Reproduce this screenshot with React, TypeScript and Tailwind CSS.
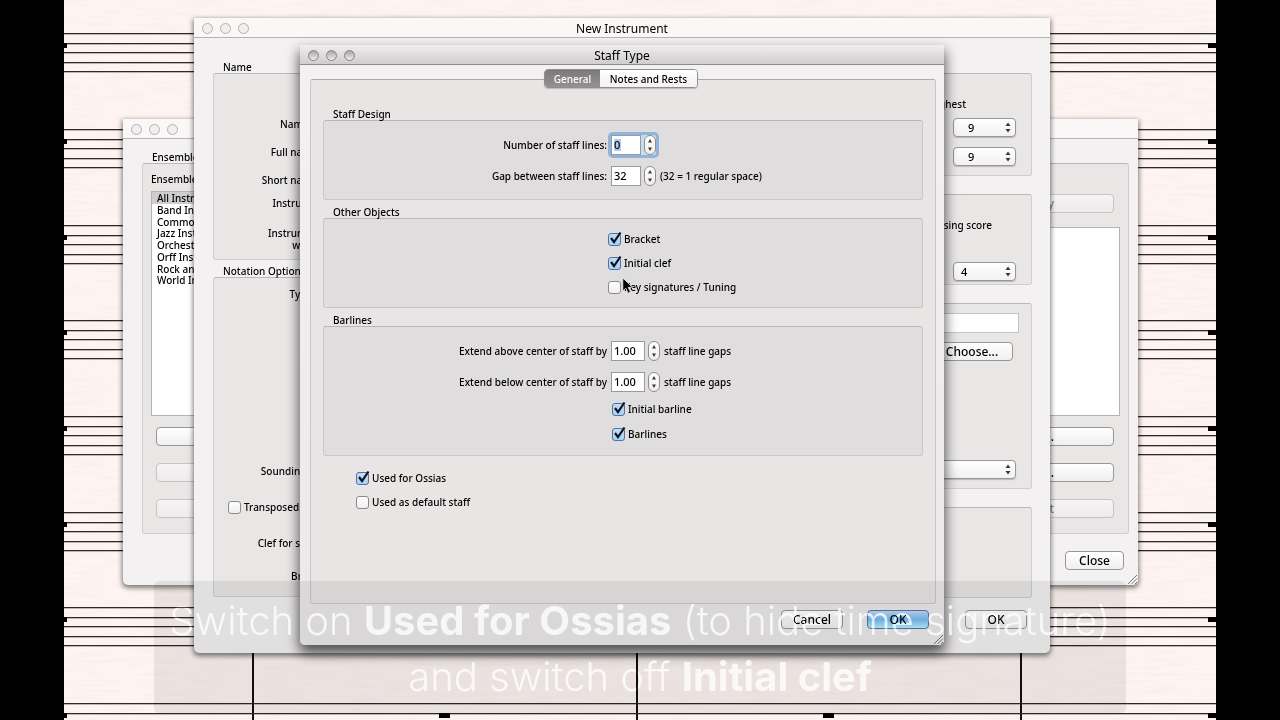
import cx from 'clsx';
import React, { useState } from 'react';

type Children = { children?: React.ReactNode };

const STAFF_TOPS = [33, 129, 225, 320, 416, 512, 607, 703];
const LINE_OFFSETS = [0, 10, 19, 29, 38];
const BARLINES = [189, 573, 957];
const RESTS = [-8, 375, 759, 1144];

const ENSEMBLES = [
  'All Instruments',
  'Band Instruments',
  'Common Instruments',
  'Jazz Instruments',
  'Orchestral Instruments',
  'Orff Instruments',
  'Rock and Pop Instruments',
  'World Instruments',
];

const ScoreComponent = () => (
  <svg className="absolute inset-0 size-full" aria-hidden="true">
    <filter id="paper" x="0" y="0" width="100%" height="100%">
      <feTurbulence type="fractalNoise" baseFrequency="0.025 0.3" numOctaves="3" seed="4" />
      <feColorMatrix values="0 0 0 0 0.9  0 0 0 0 0.76  0 0 0 0 0.72  0.6 0 0 0 -0.2" />
    </filter>
    <rect width="100%" height="100%" filter="url(#paper)" />
    {BARLINES.map((x) => (
      <line key={x} x1={x} x2={x} y1="640" y2="100%" stroke="#111" strokeWidth="2" />
    ))}
    {STAFF_TOPS.map((top) => (
      <g key={top}>
        {LINE_OFFSETS.map((offset) => (
          <rect key={offset} y={top + offset} width="100%" height="1.3" fill="#2e2828" />
        ))}
        {RESTS.map((x) => (
          <rect key={x} x={x} y={top + 10} width="11" height="5" fill="#000" />
        ))}
      </g>
    ))}
  </svg>
);

const GripComponent = () => (
  <svg className="absolute right-0 bottom-0 size-3" viewBox="0 0 12 12" aria-hidden="true">
    <path d="M2 11 11 2M5.500 11 11 5.500M9 11l2-2" stroke="#777" strokeWidth="1" />
    <path d="M3 12 12 3M6.500 12 12 6.500" stroke="#fff" strokeWidth="0.6" />
  </svg>
);

type WindowProps = Children & {
  title?: string;
  active?: boolean;
  resizable?: boolean;
  className: string;
};

const WindowComponent = ({ title, active, resizable, className, children }: WindowProps) => (
  <section
    className={cx(
      'absolute rounded-b-[5px]',
      active
        ? 'bg-linear-to-b from-[#f3f1f1] to-[#eae8e8] shadow-[0_7px_13px_1px_rgba(0,0,0,0.65)]'
        : 'bg-[#f3f1f1] shadow-[0_2px_5px_1px_rgba(0,0,0,0.5)]',
      className
    )}
  >
    <header
      className={cx(
        'flex h-5 items-center border-b px-2 pt-[2px]',
        active
          ? 'border-[#8d8b8b] bg-linear-to-b from-[#f0eeee] to-[#cfcdcd]'
          : 'border-[#b5b2b2] bg-[#faf7f7]'
      )}
    >
      <div className="flex w-16 gap-[7px]">
        {['Close', 'Minimize', 'Zoom'].map((name) => (
          <button
            key={name}
            type="button"
            aria-label={`${name} window`}
            className={cx(
              'size-[11px] rounded-full border',
              active
                ? 'border-[#858383] bg-linear-to-b from-[#a8a6a6] to-[#efeded]'
                : 'border-[#b3b0b0] bg-[#f1eeee]'
            )}
          />
        ))}
      </div>
      <h2 className="flex-1 pr-16 text-center text-[12px] leading-4 font-normal">{title}</h2>
    </header>
    {children}
    {resizable && <GripComponent />}
  </section>
);

type GroupProps = Children & {
  legend?: string;
  className?: string;
  tone?: 'light' | 'dark';
};

const GroupComponent = ({ legend, className, tone = 'light', children }: GroupProps) => (
  <div>
    {legend && <h3 className="px-[10px] leading-3">{legend}</h3>}
    <div
      className={cx(
        'rounded-[3px] border border-t-[#b9b7b7]',
        tone === 'dark' ? 'border-[#c9c7c7] bg-[#dfdddd]' : 'border-[#cfcdcd] bg-[#e9e6e6]',
        className
      )}
    >
      {children}
    </div>
  </div>
);

const CheckboxComponent = ({ label, checked }: { label: string; checked?: boolean }) => (
  <label className="flex h-4 items-center gap-[3px]">
    <span className="relative flex">
      <input
        type="checkbox"
        defaultChecked={checked}
        className="peer size-[13px] appearance-none rounded-[3px] border border-[#8b8989] bg-linear-to-b from-white to-[#f0eeee] checked:border-[#51719f] checked:from-[#c3dcf5] checked:to-[#a5d3f7]"
      />
      <svg
        className="pointer-events-none absolute -top-[2px] left-0 hidden h-[15px] w-[14px] peer-checked:block"
        viewBox="0 0 14 15"
        aria-hidden="true"
      >
        <path d="M3 7 6 11 12.500 1.500" fill="none" stroke="#10131f" strokeWidth="2.200" />
      </svg>
    </span>
    {label}
  </label>
);

const StepperComponent = ({ name }: { name: string }) => (
  <div className="relative flex h-5 w-3 flex-col overflow-hidden rounded-[6px] border border-[#8f8d8d] bg-linear-to-b from-white to-[#efeded]">
    <button type="button" aria-label={`Increase ${name}`} className="flex-1" />
    <button type="button" aria-label={`Decrease ${name}`} className="flex-1" />
    <svg className="pointer-events-none absolute inset-0 size-full" viewBox="0 0 10 18">
      <path d="M3 6.500 5 3l2 3.500zM3 11.500 5 15l2-3.500z" fill="#3c3c3c" />
    </svg>
  </div>
);

type NumberRowProps = {
  id: string;
  label: string;
  value: string;
  suffix?: string;
  wide?: boolean;
  focused?: boolean;
};

const NumberRowComponent = ({ id, label, value, suffix, wide, focused }: NumberRowProps) => (
  <div className="flex h-5 items-center gap-1">
    <label htmlFor={id} className="w-[283px] text-right">
      {label}
    </label>
    <div
      className={cx('flex items-center gap-[3px]', {
        'rounded-[2px] bg-[#c9dcee] shadow-[0_0_0_3px_#8fb5da]': focused,
      })}
    >
      <div
        className={cx(
          'flex h-5 items-center border border-[#9b9999] bg-white text-[11px]',
          wide ? 'w-[34px]' : 'w-[30px]'
        )}
      >
        {focused ? (
          <input
            id={id}
            defaultValue={value}
            className="ml-[2px] h-3 w-[7px] bg-[#aecdf0] leading-3 outline-none"
          />
        ) : (
          <input id={id} defaultValue={value} className="w-full px-[2px] leading-4 outline-none" />
        )}
      </div>
      <StepperComponent name={label} />
    </div>
    {suffix && <span>{suffix}</span>}
  </div>
);

type SelectProps = { label: string; value: string; className?: string };

const SelectComponent = ({ label, value, className }: SelectProps) => (
  <div className="relative flex">
    <select
      aria-label={label}
      defaultValue={value}
      className={cx(
        'h-[19px] appearance-none rounded-[4px] border border-[#989696] bg-linear-to-b from-white to-[#f3f1f1] text-[11px] leading-4 shadow-[0_1px_1px_rgba(0,0,0,0.2)]',
        className
      )}
    >
      <option>{value}</option>
    </select>
    <svg
      className="pointer-events-none absolute top-[4px] right-[5px] h-[11px] w-[6px]"
      viewBox="0 0 6 11"
      aria-hidden="true"
    >
      <path d="M.5 4 3 .5 5.500 4zM.5 7 3 10.500 5.500 7z" fill="#3a3a3a" />
    </svg>
  </div>
);

type ButtonProps = Children & {
  primary?: boolean;
  faded?: boolean;
  className?: string;
};

const ButtonComponent = ({ primary, faded, className, children }: ButtonProps) => (
  <button
    type="button"
    className={cx(
      'h-[19px] rounded-[4px] border bg-linear-to-b text-[12px] leading-4',
      primary && 'border-[#5873a8] from-[#bcd9f5] via-[#78b8f0] to-[#b5f0ff]',
      faded && 'border-[#c5c3c3] from-[#f5f3f3] to-[#edebeb] text-[#7b8c92]',
      !primary && !faded && 'border-[#989696] from-white to-[#f1efef]',
      className
    )}
  >
    {children}
  </button>
);

const EnsembleWindowComponent = () => (
  <WindowComponent resizable={true} className="top-[119px] left-[59px] w-[1015px]">
    <div className="px-[9px] pt-3 pb-[15px] pl-[19px]">
      <GroupComponent legend="Ensembles" className="flex justify-between pr-2 pb-[15px] pl-2">
        <div className="w-64 pt-[9px]">
          <div className="leading-3">Ensembles available:</div>
          <div className="mt-[6px] h-[225px] border border-[#b5b3b3] bg-white">
            <ul role="listbox" aria-label="Ensembles" className="grid h-[94px] auto-rows-fr">
              {ENSEMBLES.map((name, index) => (
                <li
                  key={name}
                  role="option"
                  aria-selected={index === 0}
                  className={cx('px-[5px] leading-3', { 'bg-[#cfcdcd]': index === 0 })}
                >
                  {name}
                </li>
              ))}
            </ul>
          </div>
          <div className="mt-[11px] flex flex-col gap-[17px] px-[5px]">
            <ButtonComponent />
            <ButtonComponent faded={true} />
            <ButtonComponent faded={true} />
          </div>
        </div>
        <div className="w-64 pt-[30px]">
          <div className="flex flex-col px-[6px]">
            <ButtonComponent faded={true} className="pr-[59px] text-right">
              Copy
            </ButtonComponent>
          </div>
          <div className="mt-[14px] h-[189px] border border-[#b5b3b3] bg-white" />
          <div className="mt-[11px] flex flex-col gap-[17px] px-[6px]">
            <ButtonComponent className="pr-[59px] text-right">New...</ButtonComponent>
            <ButtonComponent className="pr-[59px] text-right">Edit...</ButtonComponent>
            <ButtonComponent faded={true} className="pr-[59px] text-right">
              Default
            </ButtonComponent>
          </div>
        </div>
      </GroupComponent>
      <div className="mt-[17px] flex justify-end pr-[5px]">
        <ButtonComponent className="w-[59px]">Close</ButtonComponent>
      </div>
    </div>
  </WindowComponent>
);

const InstrumentWindowComponent = () => (
  <WindowComponent title="New Instrument" className="top-[18px] left-[130px] w-[856px]">
    <div className="pt-[23px] pr-[18px] pb-6 pl-[19px]">
      <div className="flex gap-[18px]">
        <div className="flex flex-1 flex-col gap-[5px]">
          <GroupComponent legend="Name" className="h-[187px] pt-[44px] leading-3">
            <div className="w-[146px] text-right">
              <div>Name in dialogs:</div>
              <div className="mt-4">Full name in score:</div>
              <div className="mt-4">Short name in score:</div>
              <div className="mt-[11px]">Instrument range:</div>
              <div className="mt-[18px]">
                Instrument change
                <br />
                warning label:
              </div>
            </div>
          </GroupComponent>
          <GroupComponent legend="Notation Options" className="h-[320px] pt-[10px] leading-3">
            <div className="w-[146px] text-right">
              <div>Type of staves:</div>
              <div className="mt-[165px]">Sounding pitch clefs:</div>
              <div className="mt-[22px] flex pl-[14px] whitespace-nowrap">
                <CheckboxComponent label="Transposed pitch" />
              </div>
              <div className="mt-[22px]">Clef for second stave:</div>
              <div className="mt-[21px]">Bracket name:</div>
            </div>
          </GroupComponent>
        </div>
        <div className="flex w-[240px] flex-col gap-[18px] pt-3">
          <GroupComponent className="flex h-[103px] flex-col items-end pt-6 pr-[15px]">
            <div className="pr-[50px] leading-3">Highest</div>
            <div className="mt-2 flex flex-col gap-[10px]">
              <SelectComponent label="Highest note octave" value="9" className="w-[63px] pl-[14px]" />
              <SelectComponent label="Comfortable octave" value="9" className="w-[63px] pl-[14px]" />
            </div>
          </GroupComponent>
          <GroupComponent className="flex h-[91px] flex-col items-end pt-6 pr-[15px]">
            <div className="pr-6 leading-3">In transposing score</div>
            <div className="mt-[31px]">
              <SelectComponent label="Octave" value="4" className="w-[63px] pl-[7px]" />
            </div>
          </GroupComponent>
          <GroupComponent className="flex h-[186px] flex-col items-end pt-[9px] pr-3">
            <input
              aria-label="Sound"
              className="h-5 w-[180px] border border-[#c5c3c3] bg-white outline-none"
            />
            <div className="mt-[9px] pr-[6px]">
              <ButtonComponent className="w-[82px]">Choose...</ButtonComponent>
            </div>
            <div className="mt-[99px] pr-[3px]">
              <SelectComponent label="Glissando type" value="" className="w-[150px]" />
            </div>
          </GroupComponent>
          <GroupComponent className="h-[91px]" />
        </div>
      </div>
      <div className="mt-3 flex justify-end pr-[5px]">
        <ButtonComponent className="w-[62px]">OK</ButtonComponent>
      </div>
    </div>
  </WindowComponent>
);

const StaffTypeWindowComponent = () => {
  const [tab, setTab] = useState('General');

  return (
    <WindowComponent
      title="Staff Type"
      active={true}
      resizable={true}
      className="top-[45px] left-[236px] w-[644px]"
    >
      <div className="pt-1 pr-2 pb-4 pl-[10px]">
        <div className="relative -mb-[9px] flex justify-center pr-1">
          <div className="flex h-[19px] overflow-hidden rounded-[4px] border border-[#8f8d8d] shadow-[0_1px_1px_rgba(0,0,0,0.2)]">
            {['General', 'Notes and Rests'].map((name) => (
              <button
                key={name}
                type="button"
                className={cx(
                  'leading-4 first:w-[55px] last:w-[97px]',
                  tab === name
                    ? 'bg-linear-to-b from-[#7b7979] to-[#939191] text-white'
                    : 'bg-linear-to-b from-white to-[#f3f1f1]'
                )}
                onClick={() => setTab(name)}
              >
                {name}
              </button>
            ))}
          </div>
        </div>
        <div className="rounded-[3px] border border-[#c9c7c7] border-t-[#aaa8a8] bg-[#e9e5e5] px-3 pt-7 pb-[93px]">
          <div className="flex flex-col gap-[6px]">
            <GroupComponent
              legend="Staff Design"
              tone="dark"
              className="flex flex-col gap-[11px] pt-[14px] pb-[13px]"
            >
              <NumberRowComponent
                id="lines"
                label="Number of staff lines:"
                value="0"
                focused={true}
              />
              <NumberRowComponent
                id="gap"
                label="Gap between staff lines:"
                value="32"
                suffix="(32 = 1 regular space)"
              />
            </GroupComponent>
            <GroupComponent
              legend="Other Objects"
              tone="dark"
              className="flex flex-col gap-2 pt-3 pb-3 pl-[284px]"
            >
              <CheckboxComponent label="Bracket" checked={true} />
              <CheckboxComponent label="Initial clef" checked={true} />
              <CheckboxComponent label="Key signatures / Tuning" />
            </GroupComponent>
            <GroupComponent legend="Barlines" tone="dark" className="pt-[14px] pb-[13px]">
              <div className="flex flex-col gap-[11px]">
                <NumberRowComponent
                  id="above"
                  label="Extend above center of staff by"
                  value="1.00"
                  suffix="staff line gaps"
                  wide={true}
                />
                <NumberRowComponent
                  id="below"
                  label="Extend below center of staff by"
                  value="1.00"
                  suffix="staff line gaps"
                  wide={true}
                />
              </div>
              <div className="mt-[9px] flex flex-col gap-[9px] pl-[288px]">
                <CheckboxComponent label="Initial barline" checked={true} />
                <CheckboxComponent label="Barlines" checked={true} />
              </div>
            </GroupComponent>
          </div>
          <div className="mt-[14px] flex flex-col gap-2 pl-[33px]">
            <CheckboxComponent label="Used for Ossias" checked={true} />
            <CheckboxComponent label="Used as default staff" />
          </div>
        </div>
        <div className="mt-[6px] flex justify-end gap-6 pr-[7px]">
          <ButtonComponent className="w-[62px]">Cancel</ButtonComponent>
          <ButtonComponent primary={true} className="w-[62px]">
            OK
          </ButtonComponent>
        </div>
      </div>
    </WindowComponent>
  );
};

const CursorComponent = () => (
  <svg
    className="absolute top-[277px] left-[558px] h-[18px] w-3"
    viewBox="0 0 12 18"
    aria-hidden="true"
  >
    <path
      d="M.8 1v13l3-2.800 2.200 5 2.400-1-2.200-4.900h4.300z"
      fill="#000"
      stroke="#eee"
      strokeWidth="0.800"
    />
  </svg>
);

const CaptionComponent = () => (
  <div className="absolute inset-x-[90px] bottom-[7px] rounded-[5px] bg-black/7 pt-3 pb-2 text-center font-['Inter',sans-serif]">
    <p className="text-[40px] leading-[56px] font-light whitespace-nowrap text-white/80 mix-blend-overlay">
      Switch on <b className="font-bold">Used for Ossias</b> (to hide time signature)
      <br />
      and switch off <b className="font-bold">Initial clef</b>
    </p>
  </div>
);

export default function App() {
  return (
    <div className="h-screen bg-black px-[5%] font-['Noto_Sans',sans-serif] text-[10px] font-medium text-black">
      <main className="relative h-full overflow-hidden bg-[#fef5f3]">
        <ScoreComponent />
        <EnsembleWindowComponent />
        <InstrumentWindowComponent />
        <StaffTypeWindowComponent />
        <CursorComponent />
        <CaptionComponent />
      </main>
    </div>
  );
}
